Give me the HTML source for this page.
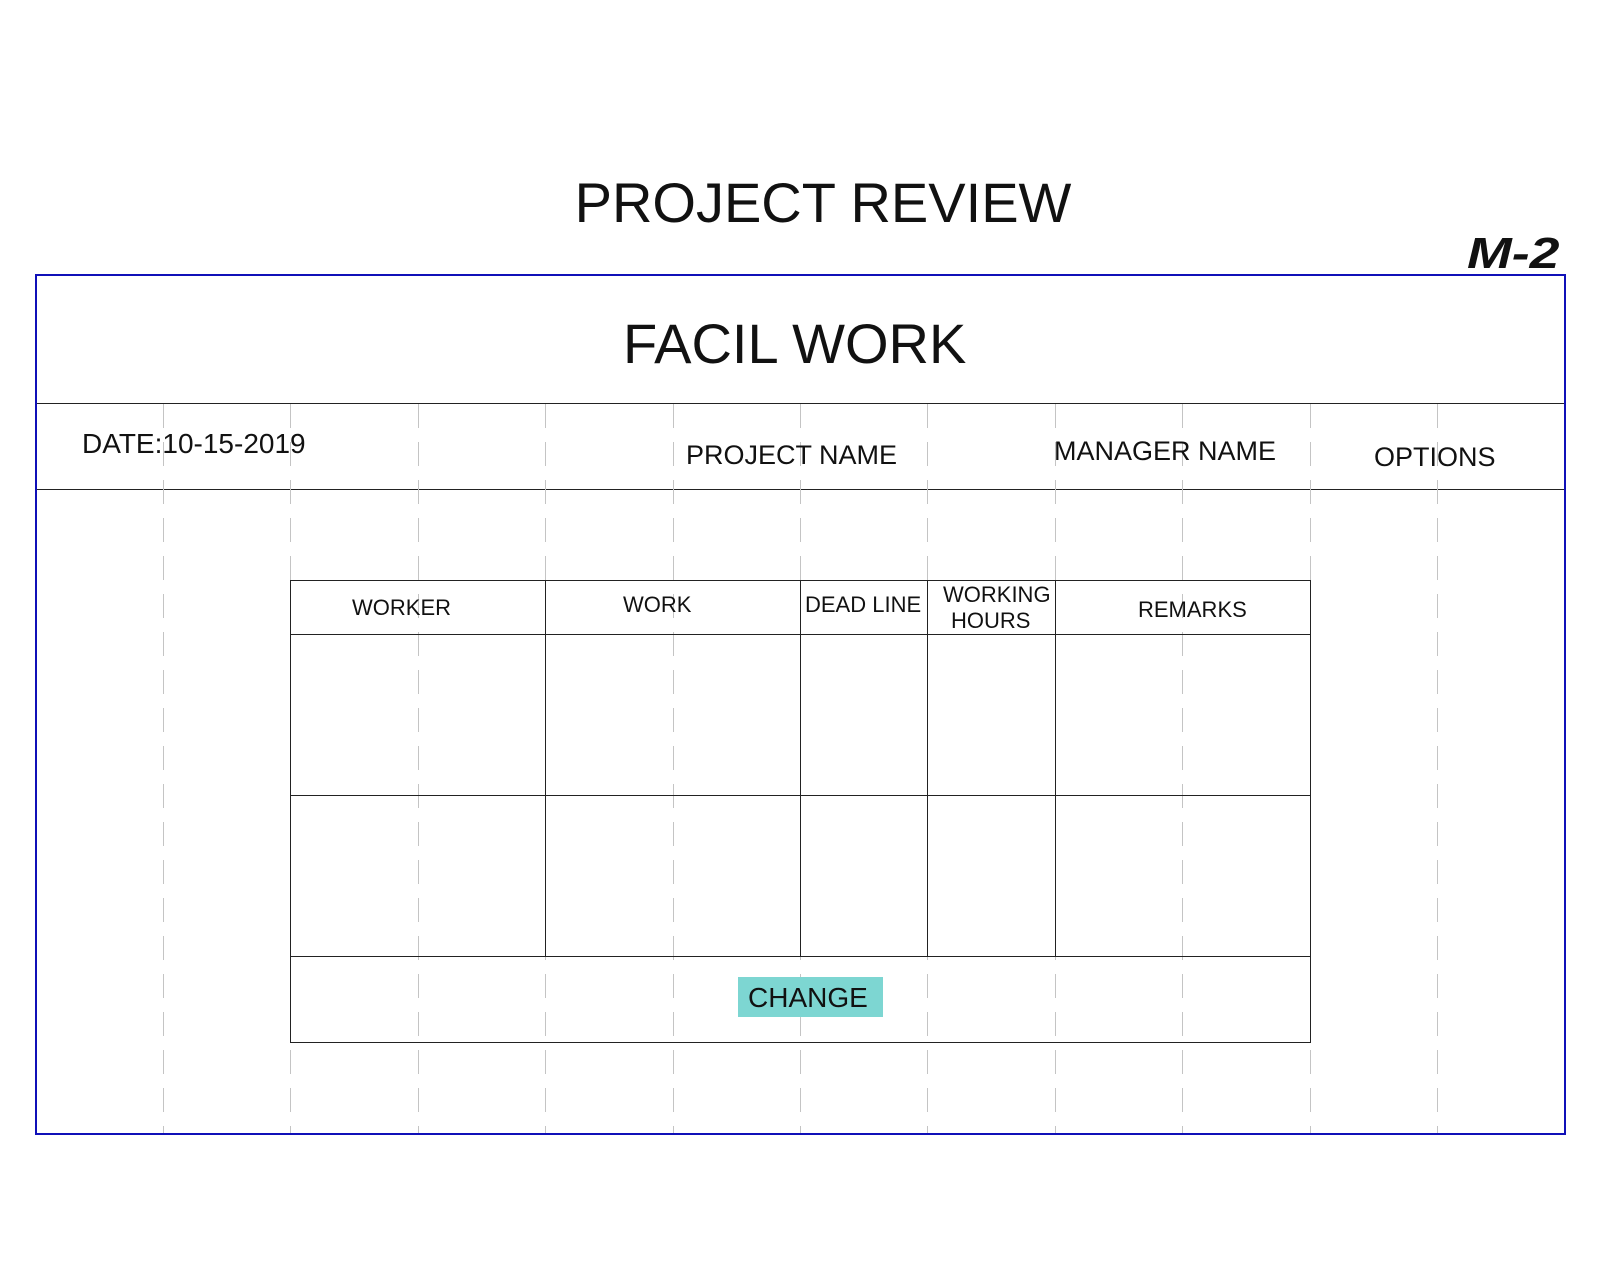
<!DOCTYPE html>
<html><head><meta charset="utf-8"><style>
body{margin:0;width:1600px;height:1280px;background:#fff;position:relative;overflow:hidden;font-family:"Liberation Sans",Arial,sans-serif;color:#111}
.a{position:absolute;white-space:nowrap;line-height:1}
.d{position:absolute;width:1px;top:404px;height:729px;background:repeating-linear-gradient(to bottom,#c4c4c4 0 24px,transparent 24px 38px)}
.h{position:absolute;height:1px;background:#222}
.v{position:absolute;width:1px;background:#222}
</style></head><body>
<div class="a" style="left:0;width:1646px;text-align:center;top:175px;font-size:56px">PROJECT REVIEW</div>
<div class="a" style="left:1467px;top:232px;font-size:44px;font-weight:bold;font-style:italic;transform:scaleX(1.22);transform-origin:left">M-2</div>
<div style="position:absolute;left:35px;top:274px;width:1527px;height:857px;border:2px solid #1010b8"></div>
<div class="h" style="left:37px;width:1527px;top:403px"></div>
<div class="h" style="left:37px;width:1527px;top:489px"></div>
<div class="d" style="left:163px"></div><div class="d" style="left:290px"></div><div class="d" style="left:418px"></div><div class="d" style="left:545px"></div><div class="d" style="left:673px"></div><div class="d" style="left:800px"></div><div class="d" style="left:927px"></div><div class="d" style="left:1055px"></div><div class="d" style="left:1182px"></div><div class="d" style="left:1310px"></div><div class="d" style="left:1437px"></div>
<div class="a" style="left:623px;top:316px;font-size:56px">FACIL WORK</div>
<div class="a" style="left:82px;top:430px;font-size:28px">DATE:10-15-2019</div>
<div class="a" style="left:686px;top:442px;font-size:27px">PROJECT NAME</div>
<div class="a" style="left:1054px;top:438px;font-size:27px">MANAGER NAME</div>
<div class="a" style="left:1374px;top:444px;font-size:27px">OPTIONS</div>
<div style="position:absolute;left:290px;top:580px;width:1019px;height:461px;border:1px solid #222"></div>
<div class="h" style="left:290px;width:1020px;top:634px"></div>
<div class="h" style="left:290px;width:1020px;top:795px"></div>
<div class="h" style="left:290px;width:1020px;top:956px"></div>
<div class="v" style="left:545px;top:580px;height:376px"></div>
<div class="v" style="left:800px;top:580px;height:376px"></div>
<div class="v" style="left:927px;top:580px;height:376px"></div>
<div class="v" style="left:1055px;top:580px;height:376px"></div>
<div class="a" style="left:352px;top:597px;font-size:22px">WORKER</div>
<div class="a" style="left:623px;top:594px;font-size:22px">WORK</div>
<div class="a" style="left:805px;top:594px;font-size:22px">DEAD LINE</div>
<div class="a" style="left:943px;top:584px;font-size:22px">WORKING</div>
<div class="a" style="left:951px;top:610px;font-size:22px">HOURS</div>
<div class="a" style="left:1138px;top:599px;font-size:22px">REMARKS</div>
<div style="position:absolute;left:738px;top:977px;width:145px;height:40px;background:#7dd6d2"></div>
<div class="a" style="left:748px;top:984px;font-size:28px">CHANGE</div>
</body></html>
